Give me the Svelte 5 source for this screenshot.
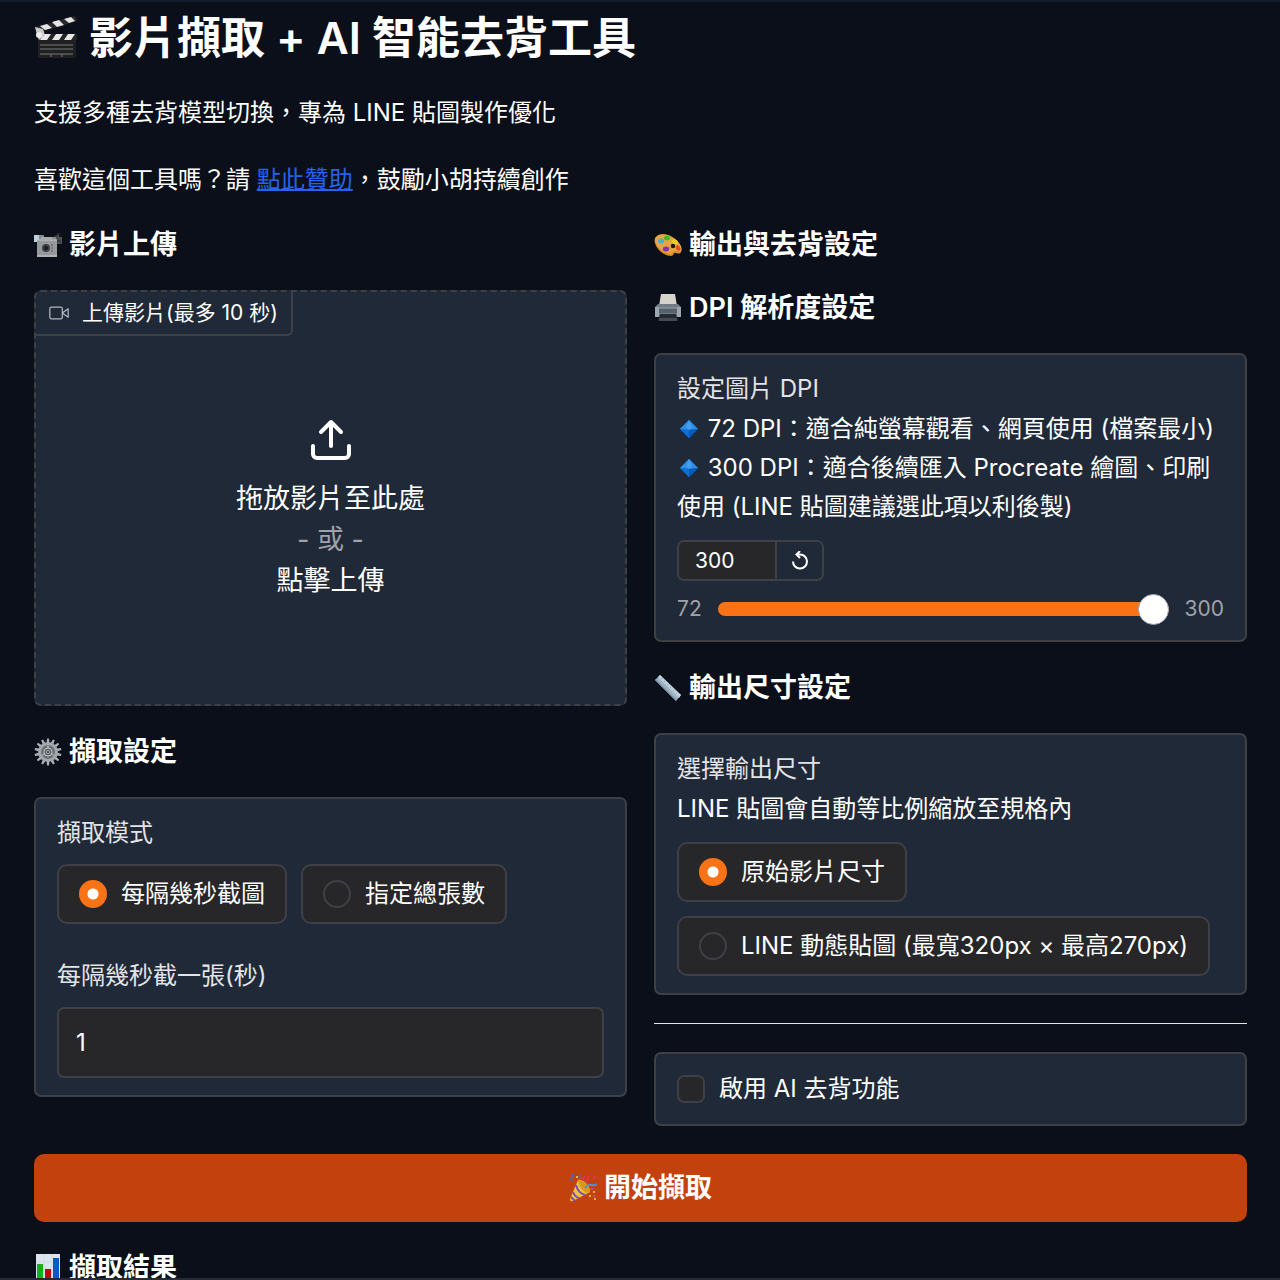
<script lang="ts">
	let dpi = $state(300);
	let mode = $state('interval');
	let interval = $state(1);
	let size = $state('original');
	let removeBg = $state(false);

	const modes = [
		{ value: 'interval', label: '每隔幾秒截圖' },
		{ value: 'count', label: '指定總張數' }
	];
	const sizes = [
		{ value: 'original', label: '原始影片尺寸' },
		{ value: 'line', label: 'LINE 動態貼圖 (最寬320px × 最高270px)' }
	];
	const progress = $derived(((dpi - 72) / (300 - 72)) * 100);
</script>

<svelte:head><title>影片擷取 + AI 智能去背工具</title></svelte:head>

{#snippet diamond()}
	<svg class="diamond" viewBox="0 0 24 24" aria-hidden="true">
		<path d="M12 3 21 12 12 21 3 12z" fill="#0a66cf" />
		<path d="M12 3 21 12 12 13 3 12z" fill="#2f8de6" />
		<path d="M12 3 15 10 12 13 9 10z" fill="#429df0" />
		<path d="M3 12 12 13v8z" fill="#0b70d8" />
		<path d="M21 12 12 13v8z" fill="#075abb" />
	</svg>
{/snippet}

<div class="page">
	<main>
		<h1>
			<svg viewBox="0 0 44 44" aria-hidden="true">
				<path d="M4 20h38v20q0 2-2 2H6q-2 0-2-2z" fill="#202020" />
				<path d="M4 18h39v6H4z" fill="#252525" />
				<path d="m10 18h7l-4 6H6zM22 18h7l-4 6h-7zM34 18h7l-4 6h-7z" fill="#e8e8e8" />
				<path d="M1 11 41 0l2 5L3 17z" fill="#292929" />
				<path d="m6 10 7-2 5 4-7 2zM18 6l7-2 5 5-7 2zM30 3l7-2 4 4-6 2z" fill="#e5e5e5" />
				<path d="M1 11 9 13 11 19 5 24 3 19z" fill="#c8c8c8" />
				<circle cx="5" cy="19" r="3" fill="#eee" />
				<path d="M6 29h33M6 33h33M6 38h33M17 38v3M28 38v3" stroke="#77797a" />
			</svg>
			影片擷取 + AI 智能去背工具
		</h1>
		<p>支援多種去背模型切換，專為 LINE 貼圖製作優化</p>
		<p>喜歡這個工具嗎？請 <a href="#sponsor">點此贊助</a>，鼓勵小胡持續創作</p>

		<div class="columns">
			<section class="column">
				<h3>
					<svg viewBox="0 0 28 28" aria-hidden="true">
						<path d="m18 7 7-5v4h3v7h-7z" fill="#4c5054" />
						<path d="m21 6 5-4v4M22 10h5" stroke="#222629" fill="none" />
						<path d="M0 4h10v2h12v5H0z" fill="#858a8d" />
						<path d="M0 4h5v7H0z" fill="#b8d3df" />
						<path d="M3 9h20v17H3z" fill="#95999b" />
						<path d="M3 9h20M3 25h20M7 7h11" stroke="#c8caca" />
						<circle cx="12" cy="17" r="4" fill="#3b4043" />
						<circle cx="12" cy="17" r="2" fill="#191c20" />
						<path d="M17 14h2M17 17h2M17 20h2" stroke="#694d43" />
					</svg>
					影片上傳
				</h3>

				<div class="upload">
					<div class="upload-tag">
						<svg viewBox="0 0 24 24" aria-hidden="true">
							<rect x="1" y="5" width="15" height="14" rx="2" />
							<path d="m23 7-7 5 7 5z" />
						</svg>
						上傳影片(最多 10 秒)
					</div>
					<button class="drop" type="button">
						<svg viewBox="0 0 24 24" aria-hidden="true">
							<path d="M21 15v4a2 2 0 0 1-2 2H5a2 2 0 0 1-2-2v-4M17 8l-5-5-5 5M12 3v12" />
						</svg>
						<span>拖放影片至此處</span>
						<span class="or">- 或 -</span>
						<span>點擊上傳</span>
					</button>
				</div>

				<h3>
					<svg viewBox="0 0 28 28" aria-hidden="true">
						<g fill="#a8adb0">
							{#each Array(14) as _, i}
								<path d="m12.500 5 .5-4.500h2l.5 4.500z" transform={`rotate(${(i * 360) / 14} 14 14)`} />
							{/each}
						</g>
						<circle cx="14" cy="14" r="8.500" fill="#6b7277" stroke="#a3a8ab" stroke-width="3" />
						<path d="m14 14-7 4M14 14V6M14 14l7 4" stroke="#9ba1a4" stroke-width="2" />
						<circle cx="14" cy="14" r="4" fill="#596065" stroke="#c3c7c9" />
						<circle cx="14" cy="14" r="1.500" fill="#252a2e" stroke="#b6babc" />
					</svg>
					擷取設定
				</h3>

				<div class="panel">
					<fieldset>
						<legend class="label">擷取模式</legend>
						<div class="options">
							{#each modes as option}
								<label class="option">
									<input type="radio" name="mode" value={option.value} bind:group={mode} />
									{option.label}
								</label>
							{/each}
						</div>
					</fieldset>
					<div class="field">
						<label class="label" for="interval">每隔幾秒截一張(秒)</label>
						<input id="interval" class="text" type="number" min="1" bind:value={interval} />
					</div>
				</div>
			</section>

			<section class="column">
				<h3>
					<svg viewBox="0 0 28 28" aria-hidden="true">
						<path
							d="M2 6C6 2 13 3 18 6c7 4 11 11 9 15-1 3-4 1-6 1-2 0-1 3-4 3C10 25 2 18 1 12c-1-3 0-5 1-6z"
							fill="#d48a24"
						/>
						<path
							d="M2 6C6 2 13 3 18 6c7 4 11 10 9 14-1 2-4 0-6 0-3 0-2 3-4 3C10 23 2 16 1 10c0-2 0-3 1-4z"
							fill="#e5a544"
						/>
						<ellipse cx="7" cy="10" rx="3" ry="2.500" fill="#35b6dc" />
						<ellipse cx="13" cy="7" rx="3" ry="2.300" fill="#43ba23" />
						<ellipse cx="21" cy="11" rx="3" ry="2.300" fill="#edcf23" transform="rotate(35 21 11)" />
						<ellipse cx="12" cy="18" rx="3.200" ry="2.400" fill="#8d2eaf" />
						<ellipse cx="24" cy="17" rx="2" ry="3" fill="#e64b35" transform="rotate(-30 24 17)" />
						<circle cx="19" cy="15" r="2.200" fill="#171717" />
					</svg>
					輸出與去背設定
				</h3>
				<h3>
					<svg viewBox="0 0 28 28" aria-hidden="true">
						<path d="M7 0h14l2 12H5z" fill="#d8d2cc" />
						<path d="M4 10h20l3 3v10H1V13z" fill="#717b86" />
						<path d="M1 13h4v10H1zM23 13h4v10h-4z" fill="#9aa6b0" />
						<path d="M5 14h18v5H5z" fill="#56616c" />
						<path d="M5 14h18" stroke="#98a3ae" />
						<path d="M6 20h16l2 7H4z" fill="#252a31" />
						<path d="M5 24h18v3H5z" fill="#454b52" />
					</svg>
					DPI 解析度設定
				</h3>

				<div class="panel">
					<label class="label" for="dpi">設定圖片 DPI</label>
					<div class="info">
						{@render diamond()} 72 DPI：適合純螢幕觀看、網頁使用 (檔案最小)<br />
						{@render diamond()} 300 DPI：適合後續匯入 Procreate 繪圖、印刷使用 (LINE 貼圖建議選此項以利後製)
					</div>
					<div class="number">
						<input id="dpi" type="number" min="72" max="300" bind:value={dpi} />
						<button type="button" aria-label="重設 DPI" onclick={() => (dpi = 300)}>
							<svg viewBox="0 0 20 20" aria-hidden="true">
								<path d="M3 10.500a7 7 0 1 0 7-7H6.500" />
								<path d="M10 0 6.500 3.500 10 7" />
							</svg>
						</button>
					</div>
					<div class="slider">
						<span>72</span>
						<input
							type="range"
							min="72"
							max="300"
							aria-label="設定圖片 DPI"
							bind:value={dpi}
							style="--progress: {progress}%"
						/>
						<span>300</span>
					</div>
				</div>

				<h3>
					<svg viewBox="0 0 28 28" aria-hidden="true">
						<path d="M1 6 6 1 27 21 22 27z" fill="#9db3c4" />
						<path d="M6 1 27 21 25 24 4 3z" fill="#bdd0dd" />
						<path d="M1 6 22 27v-2L2 5z" fill="#7e95a6" />
						<path
							d="m8 4-1 1M11 7l-1 1M14 10l-1 1M17 13l-1 1M20 16l-1 1M23 19l-1 1"
							stroke="#8ea6b7"
						/>
					</svg>
					輸出尺寸設定
				</h3>

				<div class="panel">
					<fieldset>
						<legend class="label">選擇輸出尺寸</legend>
						<div class="info">LINE 貼圖會自動等比例縮放至規格內</div>
						<div class="options">
							{#each sizes as option}
								<label class="option">
									<input type="radio" name="size" value={option.value} bind:group={size} />
									{option.label}
								</label>
							{/each}
						</div>
					</fieldset>
				</div>

				<hr />

				<div class="panel">
					<label class="check">
						<input type="checkbox" bind:checked={removeBg} />
						啟用 AI 去背功能
					</label>
				</div>
			</section>
		</div>

		<button class="primary" type="button">
			<svg viewBox="0 0 28 28" aria-hidden="true">
				<path d="M9 6 1 25q0 3 3 2l17-9q0-5-4-9-4-4-8-3z" fill="#f0c33b" />
				<path d="M9 6q4-1 8 3t4 9l-4 1Q10 14 9 6z" fill="#d79a20" />
				<path d="M7 11q2 8 9 10M4 18q2 5 6 6M2 23l4 4" stroke="#7c4bc4" stroke-width="2" fill="none" />
				<path d="M16 14q3-4 6-3t6-1" stroke="#4d8fe0" stroke-width="2" fill="none" />
				<path d="M4 7q-4-2-1-4T2 0M10 4l1-4" stroke="#5a62b4" stroke-width="1.500" fill="none" />
				<path d="M14 7q0-4 2-5M17 9q3-4 1-7M24 5l3-3M12 3v2" stroke="#e3344e" stroke-width="1.800" fill="none" />
				<path d="M21 1h2M26 6h1" stroke="#ba327b" stroke-width="2" />
				<path d="M24 18h2M20 22h2M25 25h2M7 3h2" stroke="#e9b632" stroke-width="2" />
				<path d="M22 15h2M24 22h2" stroke="#b757c8" stroke-width="1.500" />
			</svg>
			開始擷取
		</button>

		<h3>
			<svg viewBox="0 0 28 28" aria-hidden="true">
				<path d="M2 0h24v28H2z" fill="#dce5ef" />
				<path d="M2 8h24M2 16h24M2 24h24M10 0v28M18 0v28" stroke="#d0dae5" />
				<path d="M3 10h6v18H3z" fill="#0ab51c" />
				<path d="M11 15h6v13h-6z" fill="#bd0711" />
				<path d="M19 4h6v24h-6z" fill="#0759c3" />
			</svg>
			擷取結果
		</h3>
	</main>
</div>

<style>
	:global(*) {
		box-sizing: border-box;
	}
	:global(body) {
		margin: 0;
		background: #0b0f19;
		color: #fff;
		font-family: Inter, 'Noto Sans CJK TC', sans-serif;
		font-size: 24px;
		line-height: 34px;
	}
	button,
	input {
		font: inherit;
		color: inherit;
	}
	svg {
		flex: none;
	}
	.page {
		height: 100vh;
		overflow-y: auto;
		scrollbar-width: none;
		border-top: 2px solid #151c30;
		border-bottom: 2px solid #272a33;
	}
	main {
		display: flex;
		flex-direction: column;
		gap: 28px;
		padding: 9px 33px 28px 34px;
	}
	h1,
	h3,
	p {
		margin: 0;
	}
	h1,
	h3,
	.primary {
		display: flex;
		align-items: center;
		font-weight: 600;
	}
	h1 {
		gap: 11px;
		font-size: 44px;
		line-height: 54px;
	}
	h1 svg {
		width: 44px;
		height: 44px;
	}
	h3 {
		gap: 7px;
		font-size: 27px;
		line-height: 35px;
	}
	h3 svg,
	.primary svg {
		width: 28px;
		height: 28px;
	}
	p {
		line-height: 39px;
	}
	a {
		color: #2563eb;
		text-decoration: underline 2px;
	}
	.columns {
		display: grid;
		grid-template-columns: repeat(2, minmax(0, 1fr));
		gap: 27px;
	}
	.column {
		display: flex;
		flex-direction: column;
		gap: 28px;
	}
	.upload {
		position: relative;
		min-height: 416px;
		display: flex;
		background: #1f2937;
		border: 2px dashed #3f3f46;
		border-radius: 7px;
	}
	.upload-tag {
		position: absolute;
		top: 0;
		left: 0;
		display: flex;
		align-items: center;
		gap: 13px;
		padding: 4px 13px;
		border: solid #3f3f46;
		border-width: 0 2px 2px 0;
		border-radius: 0 0 6px 0;
		font-size: 21px;
	}
	.upload-tag svg {
		width: 20px;
		height: 20px;
		fill: none;
		stroke: #b4b7bd;
		stroke-width: 1.5;
		stroke-linejoin: round;
	}
	.drop {
		flex: 1;
		display: flex;
		flex-direction: column;
		align-items: center;
		justify-content: center;
		padding: 20px 0 0;
		border: 0;
		background: none;
		font-size: 27px;
		line-height: 41px;
		cursor: pointer;
	}
	.drop svg {
		width: 48px;
		height: 48px;
		margin-bottom: 14px;
		fill: none;
		stroke: #fff;
		stroke-width: 2;
		stroke-linecap: round;
		stroke-linejoin: round;
	}
	.or {
		color: #a1a1aa;
	}
	.panel {
		padding: 17px 21px;
		background: #1f2937;
		border: 2px solid #3f3f46;
		border-radius: 7px;
	}
	fieldset {
		min-width: 0;
		margin: 0;
		padding: 0;
		border: 0;
	}
	.label {
		display: block;
		padding: 0;
		color: #e4e4e7;
	}
	.info {
		margin-top: 3px;
		line-height: 39px;
	}
	.diamond {
		width: 24px;
		height: 24px;
		vertical-align: -4px;
	}
	.options {
		display: flex;
		flex-wrap: wrap;
		gap: 14px;
		margin-top: 14px;
	}
	.option {
		display: flex;
		align-items: center;
		gap: 14px;
		height: 60px;
		padding: 0 20px;
		background: #27272a;
		border: 2px solid #3f3f46;
		border-radius: 10px;
	}
	.option input,
	.check input {
		appearance: none;
		flex: none;
		width: 28px;
		height: 28px;
		margin: 0;
		background: #27272a;
		border: 2px solid #3f3f46;
		border-radius: 50%;
	}
	.option input:checked {
		border-color: #f97316;
		background: radial-gradient(circle, #fff 5px, #f97316 6px);
	}
	.check input {
		border-radius: 7px;
	}
	.check input:checked {
		background: #f97316;
	}
	.field {
		margin-top: 35px;
	}
	.text {
		display: block;
		width: 100%;
		height: 71px;
		margin-top: 14px;
		padding: 0 17px;
		background: #27272a;
		border: 2px solid #3f3f46;
		border-radius: 7px;
	}
	input[type='number'] {
		appearance: textfield;
	}
	.number {
		display: flex;
		width: fit-content;
		height: 41px;
		margin-top: 14px;
		border: 2px solid #3f3f46;
		border-radius: 7px;
		overflow: hidden;
	}
	.number input {
		width: 96px;
		padding: 0 16px;
		border: 0;
		background: #27272a;
		font-size: 21px;
	}
	.number button {
		display: grid;
		place-items: center;
		width: 47px;
		padding: 0;
		border: 0;
		border-left: 2px solid #3f3f46;
		background: none;
	}
	.number svg {
		width: 20px;
		height: 20px;
		fill: none;
		stroke: #fff;
		stroke-width: 2;
	}
	.slider {
		display: flex;
		align-items: center;
		gap: 16px;
		height: 28px;
		margin-top: 14px;
		color: #a1a1aa;
		font-size: 21px;
	}
	.slider input {
		appearance: none;
		flex: 1;
		min-width: 0;
		height: 14px;
		margin: 0;
		border-radius: 7px;
		background: linear-gradient(to right, #f97316 var(--progress), #3f3f46 var(--progress));
	}
	.slider input::-webkit-slider-thumb {
		appearance: none;
		width: 31px;
		height: 31px;
		background: #fff;
		border: 1px solid #9ca3af;
		border-radius: 50%;
	}
	hr {
		width: 100%;
		height: 1px;
		margin: 0;
		border: 0;
		background: #e4e4e7;
	}
	.check {
		display: flex;
		align-items: center;
		gap: 14px;
		height: 36px;
	}
	.primary {
		justify-content: center;
		gap: 7px;
		height: 68px;
		border: 0;
		border-radius: 10px;
		background: #c2410c;
		font-size: 27px;
		cursor: pointer;
	}
</style>
